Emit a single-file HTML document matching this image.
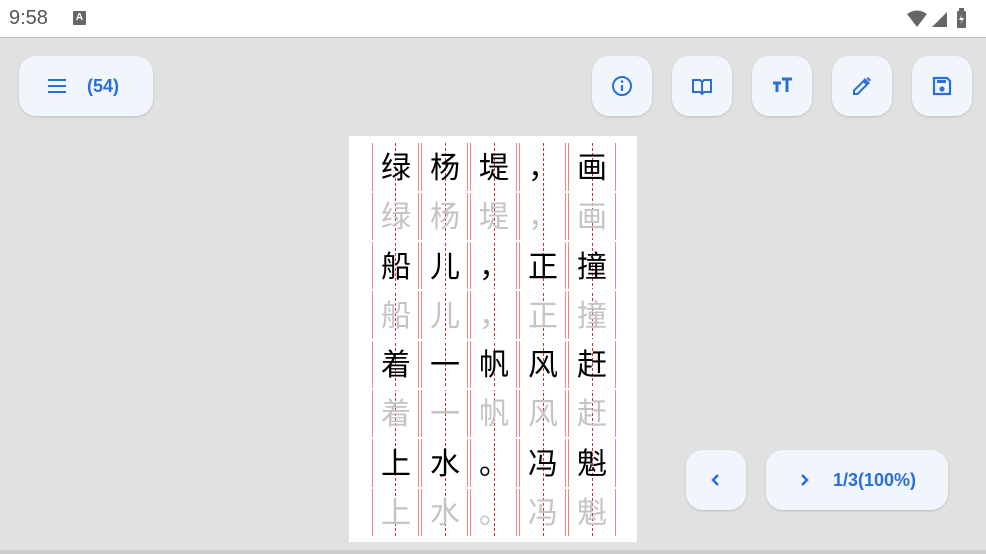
<!DOCTYPE html>
<html><head><meta charset="utf-8"><style>
body{margin:0;width:986px;height:554px;background:#e1e1e1;position:relative;overflow:hidden;font-family:"Liberation Sans","Noto Sans CJK SC",sans-serif}
.sb{position:absolute;left:0;top:0;width:986px;height:37px;background:#fff;border-bottom:1px solid #bbb}
.btn{position:absolute;background:#f1f5fc;border-radius:17px;box-shadow:0 1px 2px rgba(0,0,0,.15);display:flex;align-items:center;justify-content:center;color:#2a6fd6}
.btn svg{width:24px;height:24px}
</style></head><body>
<div class="sb">
<div style="position:absolute;left:9px;top:7px;font-size:20px;color:#555">9:58</div>
<div style="position:absolute;left:73px;top:11px;width:13px;height:14px;background:#666;border-radius:1px;color:#fff;font-size:10px;font-weight:bold;text-align:center;line-height:14px">A</div>
<svg style="position:absolute;left:905px;top:8px" width="75" height="22"><path d="M2 6 Q12 -1 22 6 L12 19 Z" fill="#666"/><path d="M42 4 L42 19 L27 19 Z" fill="#666"/><rect x="52" y="3" width="9" height="17" rx="1" fill="#666"/><rect x="54" y="0" width="5" height="4" fill="#666"/><path d="M57 6 L54 12 L57 12 L55 17 L59 10 L56 10 Z" fill="#fff"/></svg>
</div>
<div style="position:absolute;left:0;top:550px;width:986px;height:4px;background:#ccc"></div>

<div class="btn" style="left:19px;top:56px;width:134px;height:60px;justify-content:flex-start">
<svg style="margin-left:26px" viewBox="0 0 24 24"><path d="M3 6h18M3 12h18M3 18h18" stroke="#2a6fd6" stroke-width="2"/></svg>
<span style="margin-left:18px;font-size:18px;font-weight:bold">(54)</span></div>

<div class="btn" style="left:592px;top:56px;width:60px;height:60px"><svg viewBox="0 0 24 24"><circle cx="12" cy="12" r="9" fill="none" stroke="#2a6fd6" stroke-width="2"/><path d="M12 11v6" stroke="#2a6fd6" stroke-width="2.2"/><circle cx="12" cy="7.5" r="1.3" fill="#2a6fd6"/></svg></div>
<div class="btn" style="left:672px;top:56px;width:60px;height:60px"><svg viewBox="0 0 24 24"><path d="M3 6h7l2 2 2-2h7v12h-7l-2 2-2-2H3z M12 8v11" fill="none" stroke="#2a6fd6" stroke-width="2"/></svg></div>
<div class="btn" style="left:752px;top:56px;width:60px;height:60px"><svg viewBox="0 0 24 24"><path d="M3 9h8M7 9v9M12 5h10M17 5v13" stroke="#2a6fd6" stroke-width="3"/></svg></div>
<div class="btn" style="left:832px;top:56px;width:60px;height:60px"><svg viewBox="0 0 24 24"><path d="M4 20v-3.5L15 5.5l3.5 3.5L7.5 20z M13.5 7l3.5 3.5" fill="none" stroke="#2a6fd6" stroke-width="2"/><path d="M16.5 4.5l1.5-1.5 3 3-1.5 1.5z" fill="#2a6fd6"/></svg></div>
<div class="btn" style="left:912px;top:56px;width:60px;height:60px"><svg viewBox="0 0 24 24"><path d="M4 4h13l3 3v13H4z" fill="none" stroke="#2a6fd6" stroke-width="2.2"/><rect x="7" y="6" width="9" height="3" fill="#2a6fd6"/><circle cx="12" cy="15" r="2.6" fill="#2a6fd6"/></svg></div>

<div class="btn" style="left:686px;top:450px;width:60px;height:60px"><svg viewBox="0 0 24 24"><path d="M14 7l-5 5 5 5" fill="none" stroke="#2a6fd6" stroke-width="2.5"/></svg></div>
<div class="btn" style="left:766px;top:450px;width:182px;height:60px;justify-content:flex-start"><svg style="margin-left:26px" viewBox="0 0 24 24"><path d="M10 7l5 5-5 5" fill="none" stroke="#2a6fd6" stroke-width="2.5"/></svg><span style="margin-left:17px;font-size:18px;font-weight:bold">1/3(100%)</span></div>

<svg style="position:absolute;left:349px;top:136px" width="288" height="406" viewBox="349 136 288 406">
<rect x="349" y="136" width="288" height="406" fill="#fff"/>
<g stroke="#e88" stroke-width="1">
<path d="M372.5 143V536M418.5 143V536M421.5 143V536M467.5 143V536M470.5 143V536M516.5 143V536M519.5 143V536M565.5 143V536M568.5 143V536M615.5 143V536"/>
</g>
<g stroke="#c33" stroke-width="1" stroke-dasharray="3,2">
<path d="M395.5 143V536M445.5 143V536M494.5 143V536M543.5 143V536M592.5 143V536"/>
</g>
<g stroke="#fff" stroke-width="2">
<path d="M360 192H630M360 241H630M360 290H630M360 340H630M360 389H630M360 438H630M360 488H630"/>
</g>
<g font-family="'Noto Sans CJK SC',sans-serif" font-size="30" text-anchor="middle">
<g fill="#000">
<text x="396" y="178">绿</text><text x="445" y="178">杨</text><text x="494" y="178">堤</text><text x="543" y="178">，</text><text x="592" y="178">画</text>
<text x="396" y="277">船</text><text x="445" y="277">儿</text><text x="494" y="277">，</text><text x="543" y="277">正</text><text x="592" y="277">撞</text>
<text x="396" y="375">着</text><text x="445" y="375">一</text><text x="494" y="375">帆</text><text x="543" y="375">风</text><text x="592" y="375">赶</text>
<text x="396" y="474">上</text><text x="445" y="474">水</text><text x="494" y="474">。</text><text x="543" y="474">冯</text><text x="592" y="474">魁</text>
</g>
<g fill="#c4c4c4">
<text x="396" y="227">绿</text><text x="445" y="227">杨</text><text x="494" y="227">堤</text><text x="543" y="227">，</text><text x="592" y="227">画</text>
<text x="396" y="326">船</text><text x="445" y="326">儿</text><text x="494" y="326">，</text><text x="543" y="326">正</text><text x="592" y="326">撞</text>
<text x="396" y="424">着</text><text x="445" y="424">一</text><text x="494" y="424">帆</text><text x="543" y="424">风</text><text x="592" y="424">赶</text>
<text x="396" y="523">上</text><text x="445" y="523">水</text><text x="494" y="523">。</text><text x="543" y="523">冯</text><text x="592" y="523">魁</text>
</g>
</g>
</svg>
</body></html>
